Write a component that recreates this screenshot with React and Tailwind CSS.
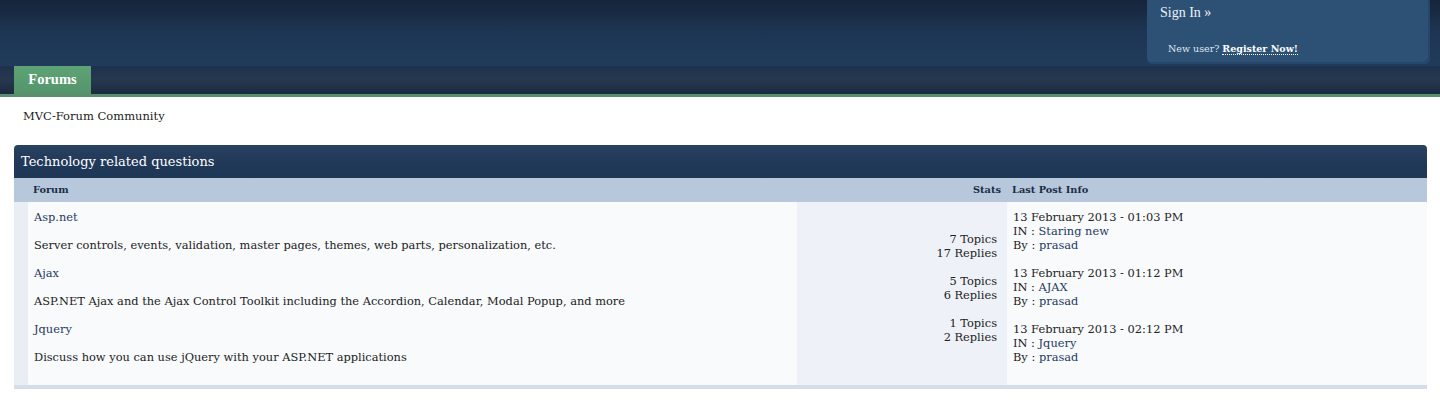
export default function App() {
  const serif = { fontFamily: '"DejaVu Serif", "Liberation Serif", serif' };
  const lib = { fontFamily: '"Liberation Serif", serif' };
  const rows = [
    { t: "Asp.net", d: "Server controls, events, validation, master pages, themes, web parts, personalization, etc.", date: "13 February 2013 - 01:03 PM", inT: "Staring new" },
    { t: "Ajax", d: "ASP.NET Ajax and the Ajax Control Toolkit including the Accordion, Calendar, Modal Popup, and more", date: "13 February 2013 - 01:12 PM", inT: "AJAX" },
    { t: "Jquery", d: "Discuss how you can use jQuery with your ASP.NET applications", date: "13 February 2013 - 02:12 PM", inT: "Jquery" },
  ];
  const stats = [["7 Topics", "17 Replies"], ["5 Topics", "6 Replies"], ["1 Topics", "2 Replies"]];
  return (
    <div className="w-[1440px] h-[400px] bg-white text-[#222]" style={serif}>
      {/* header */}
      <div className="relative h-[66px] bg-gradient-to-b from-[#15243a] via-[#1e3654] to-[#203b5b]">
        <div className="absolute left-[1147px] top-0 w-[283px] h-[64px] bg-[#2c5175] rounded-b-[6px] shadow-[inset_-2px_-2px_0_#27476a]">
          <div className="pl-[13px] pt-[4px] text-[14px] text-[#eef2f7] leading-[18px]" style={lib}>Sign In »</div>
          <div className="pl-[21px] pt-[21px] text-[9.5px] text-[#dde5ee] leading-[12px]">
            New user? <span className="font-bold text-white border-b border-dotted border-white">Register Now!</span>
          </div>
        </div>
      </div>
      {/* nav */}
      <div className="h-[28px] bg-gradient-to-b from-[#1e324d] via-[#27374f] to-[#1a2a40] flex items-end px-[14px]">
        <div className="h-[31px] w-[77px] pt-[2px] bg-gradient-to-b from-[#5ea577] to-[#55946b] rounded-t-[4px] text-white font-bold text-[14.5px] flex items-center justify-center" style={lib}>
          Forums
        </div>
      </div>
      <div className="h-[3px] bg-[#5a8e6e]" />
      {/* breadcrumb */}
      <div className="pl-[23px] pt-[12px] text-[11.5px] leading-[14px] text-[#222]">MVC-Forum Community</div>
      {/* table */}
      <div className="mx-[14px] mt-[22px] w-[1413px]">
        <div className="h-[33px] rounded-t-[4px] bg-gradient-to-b from-[#294260] via-[#22395a] to-[#1d3755] text-white text-[13px] pl-[7px] flex items-center">
          Technology related questions
        </div>
        <div className="h-[24px] bg-[#b7c8dc] flex items-center text-[9.8px] font-bold text-[#1b2d44]">
          <div className="w-[783px] pl-[19px]">Forum</div>
          <div className="w-[210px] text-right pr-[6px]">Stats</div>
          <div className="pl-[5px]">Last Post Info</div>
        </div>
        <div className="flex h-[183px] bg-[#f8fafc] text-[11.4px]">
          <div className="w-[14px] bg-[#e9eef5]" />
          <div className="w-[769px] pt-[5px] pl-[6px]">
            {rows.map((r) => (
              <div key={r.t} className="h-[56px] pt-[3px]">
                <div className="h-[14px] leading-[14px] text-[#1f3b5c]">{r.t}</div>
                <div className="h-[14px] leading-[14px] mt-[14px] text-[#222]">{r.d}</div>
              </div>
            ))}
          </div>
          <div className="w-[210px] bg-[#eef2f8] pt-[30px] pr-[10px] text-right flex flex-col gap-[14px]">
            {stats.map((s) => (
              <div key={s[0]} className="leading-[14px] text-[#222]">
                <div>{s[0]}</div>
                <div>{s[1]}</div>
              </div>
            ))}
          </div>
          <div className="pl-[6px] pt-[8px]">
            {rows.map((r) => (
              <div key={r.date} className="h-[56px] leading-[14px]">
                <div>{r.date}</div>
                <div>IN : <span className="text-[#1f3b5c]">{r.inT}</span></div>
                <div>By : <span className="text-[#1f3b5c]">prasad</span></div>
              </div>
            ))}
          </div>
        </div>
        <div className="h-[4px] bg-[#d5dde8]" />
      </div>
    </div>
  );
}
